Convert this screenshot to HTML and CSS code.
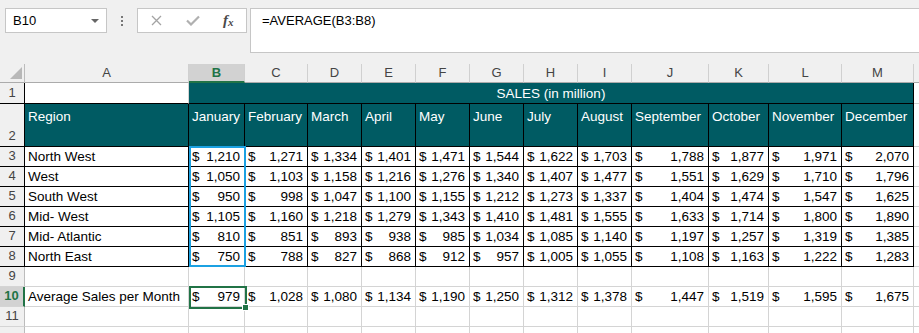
FILE: index.html
```html
<!DOCTYPE html>
<html lang="en">
<head>
    <meta charset="UTF-8">
    <title>Sales (in million)</title>
    <link rel="stylesheet" href="styles.css">
</head>
<body>
    <div class="toolbar">
        <div class="name-box">
            <span>B10</span>
            <span class="caret"></span>
        </div>
        <div class="more-dots"><i></i><i></i><i></i></div>
        <div class="fx-buttons">
            <span class="fx-btn">
                <svg width="11" height="11" viewBox="0 0 11 11"><path d="M1 1 L10 10 M10 1 L1 10" stroke="#a3a3a3" stroke-width="1.3" fill="none"/></svg>
            </span>
            <span class="fx-btn">
                <svg width="14" height="11" viewBox="0 0 14 11"><path d="M1 5.5 L5 9.5 L13 1.5" stroke="#b0b0b0" stroke-width="2.2" fill="none"/></svg>
            </span>
            <span class="fx-btn fx-label">f<sub>x</sub></span>
        </div>
        <div class="formula">=AVERAGE(B3:B8)</div>
    </div>

    <div class="sheet-wrap">
        <div id="sheet" class="sheet"></div>
        <div class="marks">
            <div class="ref-range"></div>
            <div class="active-cell"><span class="fill-handle"></span></div>
        </div>
    </div>

    <script>
        const sheet = document.getElementById('sheet');
        const letters = ['A','B','C','D','E','F','G','H','I','J','K','L','M'];
        const months = ['January','February','March','April','May','June','July','August','September','October','November','December'];
        const regions = [
            ['North West', [1210,1271,1334,1401,1471,1544,1622,1703,1788,1877,1971,2070]],
            ['West', [1050,1103,1158,1216,1276,1340,1407,1477,1551,1629,1710,1796]],
            ['South West', [950,998,1047,1100,1155,1212,1273,1337,1404,1474,1547,1625]],
            ['Mid- West', [1105,1160,1218,1279,1343,1410,1481,1555,1633,1714,1800,1890]],
            ['Mid- Atlantic', [810,851,893,938,985,1034,1085,1140,1197,1257,1319,1385]],
            ['North East', [750,788,827,868,912,957,1005,1055,1108,1163,1222,1283]]
        ];
        const averages = [979,1028,1080,1134,1190,1250,1312,1378,1447,1519,1595,1675];

        function cell(cls, html) {
            const d = document.createElement('div');
            d.className = 'cell ' + cls;
            d.innerHTML = html || '';
            sheet.appendChild(d);
            return d;
        }

        function money(n) {
            return `<span>$</span><span>${n.toLocaleString('en-US')}</span>`;
        }

        // column headers
        cell('corner', '<span class="corner-tri"></span>');
        letters.forEach(l => cell('col-head' + (l === 'B' ? ' sel-col' : ''), l));
        cell('col-head', '');

        // row 1
        cell('row-head boxed', '1');
        cell('blank line-bottom', '');
        cell('title', 'SALES (in million)');
        cell('blank', '');

        // row 2
        cell('row-head boxed', '2');
        cell('head', 'Region');
        months.forEach(m => cell('head', m));
        cell('blank', '');

        // rows 3 - 8
        regions.forEach((r, i) => {
            cell('row-head boxed', i + 3);
            cell('text boxed', r[0]);
            r[1].forEach(v => cell('num boxed', money(v)));
            cell('blank', '');
        });

        // row 9
        cell('row-head', '9');
        for (let c = 0; c < 14; c++) cell('blank', '');

        // row 10
        cell('row-head sel-row', '10');
        cell('text', 'Average Sales per Month');
        averages.forEach(v => cell('num', money(v)));
        cell('blank', '');

        // row 11 and the top edge of row 12
        cell('row-head', '11');
        for (let c = 0; c < 14; c++) cell('blank', '');
        cell('row-head', '');
        for (let c = 0; c < 14; c++) cell('blank', '');
    </script>
</body>
</html>
```

FILE: styles.css
```css
html, body {
    margin: 0;
    padding: 0;
    overflow: hidden;
}
body {
    width: 919px;
    height: 333px;
    background-color: #ffffff;
    font-family: 'Liberation Sans', Arial, sans-serif;
    color: #000000;
}
.toolbar {
    display: flex;
    align-items: flex-start;
    height: 64px;
    padding: 8px 0 0 5px;
    box-sizing: border-box;
    background-color: #f0f0f0;
}
.name-box {
    width: 102px;
    height: 25px;
    box-sizing: border-box;
    border: 1px solid #c6c6c6;
    background-color: #ffffff;
    display: flex;
    align-items: center;
    justify-content: space-between;
    padding: 0 7px 0 7px;
    font-size: 13px;
}
.caret {
    width: 0;
    height: 0;
    border-left: 4px solid transparent;
    border-right: 4px solid transparent;
    border-top: 4px solid #666666;
}
.more-dots {
    width: 30px;
    height: 25px;
    display: flex;
    flex-direction: column;
    align-items: center;
    justify-content: center;
    gap: 2px;
}
.more-dots i {
    width: 2px;
    height: 2px;
    background-color: #777777;
}
.fx-buttons {
    width: 110px;
    height: 25px;
    box-sizing: border-box;
    border: 1px solid #c6c6c6;
    background-color: #ffffff;
    display: flex;
    align-items: center;
    padding-left: 1px;
}
.fx-btn {
    width: 36px;
    display: flex;
    justify-content: center;
    align-items: center;
}
.fx-label {
    font-family: 'Liberation Serif', 'DejaVu Serif', serif;
    font-style: italic;
    font-weight: bold;
    font-size: 15px;
    color: #4a4a4a;
}
.fx-label sub {
    font-size: 11px;
    vertical-align: baseline;
    position: relative;
    top: 1px;
}
.formula {
    flex: 1;
    height: 45px;
    margin-left: 3px;
    margin-right: -2px;
    box-sizing: border-box;
    border: 1px solid #c6c6c6;
    background-color: #ffffff;
    padding: 4px 0 0 11px;
    font-size: 13px;
    line-height: 16px;
}

/* grid */
.sheet-wrap {
    display: grid;
}
.sheet, .marks {
    grid-area: 1 / 1;
    display: grid;
    grid-template-columns: 25px 164px 56px 63px 54px 54px 54px 54px 54px 54px 77px 60px 73px 72px 40px;
    grid-template-rows: 19px 21px 43px repeat(10, 20px);
}
.marks {
    pointer-events: none;
}
.cell {
    box-sizing: border-box;
    border-right: 1px solid #d4d4d4;
    border-bottom: 1px solid #d4d4d4;
    font-size: 13.5px;
    line-height: 18px;
    display: flex;
    align-items: flex-end;
    white-space: nowrap;
    overflow: hidden;
}
.corner {
    background-color: #f0f0f0;
    border-right-color: #bcbcbc;
    border-bottom-color: #ababab;
    justify-content: flex-end;
    padding: 0 2px 3px 0;
}
.corner-tri {
    width: 12px;
    height: 12px;
    background-color: #b8b8b8;
    clip-path: polygon(100% 0, 100% 100%, 0 100%);
}
.col-head {
    background-color: #f0f0f0;
    border-right-color: #d0d0d0;
    border-bottom-color: #ababab;
    justify-content: center;
    align-items: center;
    font-size: 13px;
    color: #444444;
}
.sel-col {
    background-color: #d2d2d2;
    color: #217346;
    font-weight: bold;
    border-bottom: 2px solid #217346;
}
.row-head {
    background-color: #f0f0f0;
    border-right-color: #bcbcbc;
    border-bottom-color: #d4d4d4;
    justify-content: center;
    font-size: 13px;
    color: #444444;
    padding-bottom: 1px;
}
.row-head.boxed {
    border-right-color: #000000;
}
.sel-row {
    background-color: #d2d2d2;
    color: #217346;
    font-weight: bold;
    border-right: 2px solid #217346;
}
.line-bottom {
    border-bottom-color: #000000;
}
.title {
    grid-column: span 12;
    background-color: #005b63;
    color: #ffffff;
    border-right-color: #000000;
    border-bottom-color: #000000;
    justify-content: center;
    padding-bottom: 0;
}
.head {
    background-color: #005b63;
    color: #ffffff;
    border-right-color: #000000;
    border-bottom-color: #000000;
    align-items: flex-start;
    padding: 4px 0 0 3px;
}
.text {
    padding: 0 0 0 3px;
}
.num {
    justify-content: space-between;
    padding: 0 4px 0 3px;
}
.boxed {
    border-right-color: #000000;
    border-bottom-color: #000000;
}
.ref-range {
    grid-column: 3;
    grid-row: 4 / 10;
    margin: -1px -1px 0 0;
    border: 2px solid #1ba1e2;
}
.active-cell {
    grid-column: 3;
    grid-row: 11;
    margin: -1px -2px -2px 0;
    border: 2px solid #217346;
    position: relative;
}
.fill-handle {
    position: absolute;
    right: -4px;
    bottom: -4px;
    width: 5px;
    height: 5px;
    background-color: #217346;
    border: 1px solid #ffffff;
}
```
